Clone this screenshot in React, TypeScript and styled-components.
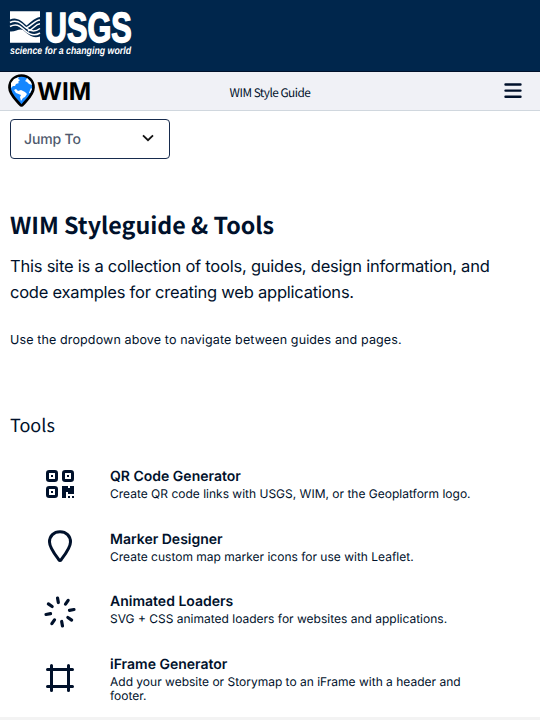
import React from "react";
import styled, { createGlobalStyle } from "styled-components";

const ink = "#00112b";
const source = '"Noto Sans CJK SC", "Noto Sans", sans-serif';

const GlobalStyle = createGlobalStyle`
  * { box-sizing: border-box; }
  html, body { margin: 0; padding: 0; }
  body {
    font-family: Inter, sans-serif;
    color: ${ink};
    background: #fff;
    text-rendering: geometricPrecision;
  }
  h1, h2, h3, p { margin: 0; }
`;

const Page = styled.div`
  height: 720px;
  overflow: hidden;
  display: flex;
  flex-direction: column;
`;

const Banner = styled.header`
  flex: none;
  height: 72px;
  padding: 11px 10px 0;
  background: #00264c;
  border-bottom: 1px solid #00112b;
  svg { display: block; overflow: visible; }
`;

const NavBar = styled.nav`
  flex: none;
  height: 39px;
  padding: 0 18px 0 8px;
  display: grid;
  grid-template-columns: 1fr auto 1fr;
  align-items: center;
  background: #f0f1f6;
  border-bottom: 1px solid #d0d7de;
  svg { display: block; }
`;

const NavTitle = styled.span`
  font: 400 11.8px/20px ${source};
  letter-spacing: -0.5px;
  padding: 4px 0 0 10px;
  color: ${ink};
`;

const MenuButton = styled.button`
  justify-self: end;
  padding: 0;
  border: 0;
  background: none;
`;

const Main = styled.main`
  flex: 1;
  min-height: 0;
  overflow: hidden;
  padding: 8px 10px 0;
`;

const JumpSelect = styled.button`
  width: 160px;
  height: 40px;
  padding: 0 15px 0 13px;
  display: flex;
  align-items: center;
  justify-content: space-between;
  border: 1px solid #172b4d;
  border-radius: 4px;
  background: #fff;
  color: #505a6e;
  font: 500 14px/20px Inter, sans-serif;
  letter-spacing: -0.15px;
  text-rendering: inherit;
`;

const JumpLabel = styled.span`
  padding-top: 1px;
`;

const Title = styled.h1`
  margin-top: 47px;
  font: 700 23.25px/36px ${source};
`;

const Lead = styled.p`
  margin-top: 11px;
  width: 500px;
  font-size: 16.5px;
  line-height: 26px;
  letter-spacing: -0.225px;
`;

const Hint = styled.p`
  margin-top: 26px;
  font-size: 12.5px;
  line-height: 20px;
  letter-spacing: 0.13px;
`;

const SectionTitle = styled.h2`
  margin-top: 59px;
  font: 400 18px/30px ${source};
`;

const ToolList = styled.div`
  margin-top: 28px;
  display: flex;
  flex-direction: column;
`;

const Tool = styled.a`
  height: 62.67px;
  display: grid;
  grid-template-columns: 100px 370px;
  color: inherit;
`;

const ToolIcon = styled.span<{ $drop: number }>`
  padding: ${(p) => p.$drop}px 0 0 34px;
  svg { display: block; }
`;

const ToolName = styled.h3`
  font-size: 14px;
  font-weight: 600;
  line-height: 18px;
`;

const ToolText = styled.p`
  padding-top: 1px;
  font-size: 12px;
  line-height: 14px;
`;

const Footer = styled.footer`
  flex: none;
  height: 3px;
  background: #f3f3f3;
`;

const UsgsLogo = () => (
  <svg width="124" height="48" viewBox="0 0 124 48" fill="#fff">
    <path d="M0 .3H30V6C24 7 20 12 16.5 14.5C12 10.5 7 5.5 0 8.5Z" />
    <path d="M0 20.5C6 21 9 17 13 19C18 23 22 28 30 25.5V31.7H0Z" />
    <g fill="none" stroke="#fff" strokeWidth="1.5">
      <path d="M0 11.5C7 7.8 11 12.5 16 16.8C21 21 26 20.5 30 17.5" />
      <path d="M0 15.5C7 11.8 10 15.5 15 19.5C20 24 25 25 30 22" />
      <path d="M16 17C22 15 24 9.5 30 9" />
      <path d="M18 20C24 18 25 13 30 12.8" />
    </g>
    <text x="34.8" y="31.3" fontFamily="Liberation Sans" fontWeight="700" fontSize="42" textLength="87" lengthAdjust="spacingAndGlyphs" stroke="#fff" strokeWidth="1.6">USGS</text>
    <text x="0" y="42.8" fontFamily="Liberation Sans" fontWeight="700" fontStyle="italic" fontSize="10.5" textLength="121" lengthAdjust="spacingAndGlyphs">science for a changing world</text>
  </svg>
);

const WimLogo = () => (
  <svg width="84" height="34" viewBox="0 0 84 34">
    <path d="M13.5 1.5C6.5 1.5 1.5 6.7 1.5 13.5C1.5 21 9 26.5 12 30.5Q13.5 32.5 15 30.5C18 26.5 25.5 21 25.5 13.5C25.5 6.7 20.5 1.5 13.5 1.5Z" fill="#1687ff" stroke="#000" strokeWidth="2.7" />
    <g fill="#fff">
      <path d="M3 9L6 5L11 3L10 5L12 6L10 8L11 9L8 10L7 12L5 12L3 14Z" />
      <path d="M6 16L8 15L10 17L13 16L17 18L19 20L17 23L15 24L13 27L12 23L13 21L8 19Z" />
      <path d="M19 4L23 8L24 11L21 10L19 8L17 7L18 6Z" />
      <path d="M23 14L24 15L22 19L21 19L22 16Z" />
    </g>
    <text x="29" y="25.5" fontFamily="Inter" fontWeight="700" fontSize="24.5" textLength="54" lengthAdjust="spacingAndGlyphs">WIM</text>
  </svg>
);

const MenuIcon = () => (
  <svg width="18" height="16" viewBox="0 0 18 16" stroke={ink} strokeWidth="2.4" strokeLinecap="round">
    <path d="M1.5 1.5H16.5M1.5 7.6H16.5M1.5 13.7H16.5" />
  </svg>
);

const Chevron = () => (
  <svg width="12" height="10" viewBox="0 0 12 10" fill="none" stroke="#111" strokeWidth="1.8">
    <path d="M1 1.3L6 6.2L11 1.3" />
  </svg>
);

const QrIcon = () => (
  <svg width="32" height="32" viewBox="0 0 32 32" fill={ink}>
    <g fill="none" stroke={ink} strokeWidth="3">
      <rect x="3.5" y="3.5" width="9" height="9" rx="1.7" />
      <rect x="19.5" y="3.5" width="9" height="9" rx="1.7" />
      <rect x="3.5" y="19.5" width="9" height="9" rx="1.7" />
    </g>
    <path d="M7 7h2v2H7zM23 7h2v2h-2zM7 23h2v2H7zM18 18h6v2h2v-2h4v8h-6v-2h-2v6h-4zM24 28h2v2h-2zM28 28h2v2h-2z" />
  </svg>
);

const MarkerIcon = () => (
  <svg width="32" height="32" viewBox="0 0.8 32 32" overflow="visible" fill="none" stroke={ink} strokeWidth="3">
    <path d="M16 1.5C9.7 1.5 5.5 5.8 5.5 11.8C5.5 17.5 11.5 25 14.7 29.3Q16 31.1 17.3 29.3C20.5 25 26.5 17.5 26.5 11.8C26.5 5.8 22.3 1.5 16 1.5Z" />
  </svg>
);

const rays = [0, 45, 90, 135, 180, 225, 270, 315];

const LoaderIcon = () => (
  <svg width="32" height="32" viewBox="0 0 32 32" stroke={ink} strokeWidth="3.2" strokeLinecap="round">
    {rays.map((angle) => (
      <path key={angle} d="M16 1.8V6.4" transform={`rotate(${angle - 10} 16 16)`} />
    ))}
  </svg>
);

const FrameIcon = () => (
  <svg width="32" height="32" viewBox="0 0 32 32" stroke={ink} strokeWidth="3" strokeLinecap="round">
    <path d="M3.5 7.5H28.5M3.5 24.5H28.5M7.5 3.5V28.5M24.5 3.5V28.5" />
  </svg>
);

const tools = [
  { name: "QR Code Generator", text: "Create QR code links with USGS, WIM, or the Geoplatform logo.", icon: <QrIcon />, drop: 0 },
  { name: "Marker Designer", text: "Create custom map marker icons for use with Leaflet.", icon: <MarkerIcon />, drop: 0 },
  { name: "Animated Loaders", text: "SVG + CSS animated loaders for websites and applications.", icon: <LoaderIcon />, drop: 3 },
  { name: "iFrame Generator", text: "Add your website or Storymap to an iFrame with a header and footer.", icon: <FrameIcon />, drop: 6 },
];

export default function App() {
  return (
    <Page>
      <GlobalStyle />
      <Banner><UsgsLogo /></Banner>
      <NavBar>
        <WimLogo />
        <NavTitle>WIM Style Guide</NavTitle>
        <MenuButton aria-label="Menu"><MenuIcon /></MenuButton>
      </NavBar>
      <Main>
        <JumpSelect><JumpLabel>Jump To</JumpLabel><Chevron /></JumpSelect>
        <Title>WIM Styleguide &amp; Tools</Title>
        <Lead>This site is a collection of tools, guides, design information, and code examples for creating web applications.</Lead>
        <Hint>Use the dropdown above to navigate between guides and pages.</Hint>
        <SectionTitle>Tools</SectionTitle>
        <ToolList>
          {tools.map((t) => (
            <Tool key={t.name}>
              <ToolIcon $drop={t.drop}>{t.icon}</ToolIcon>
              <div>
                <ToolName>{t.name}</ToolName>
                <ToolText>{t.text}</ToolText>
              </div>
            </Tool>
          ))}
        </ToolList>
      </Main>
      <Footer />
    </Page>
  );
}
